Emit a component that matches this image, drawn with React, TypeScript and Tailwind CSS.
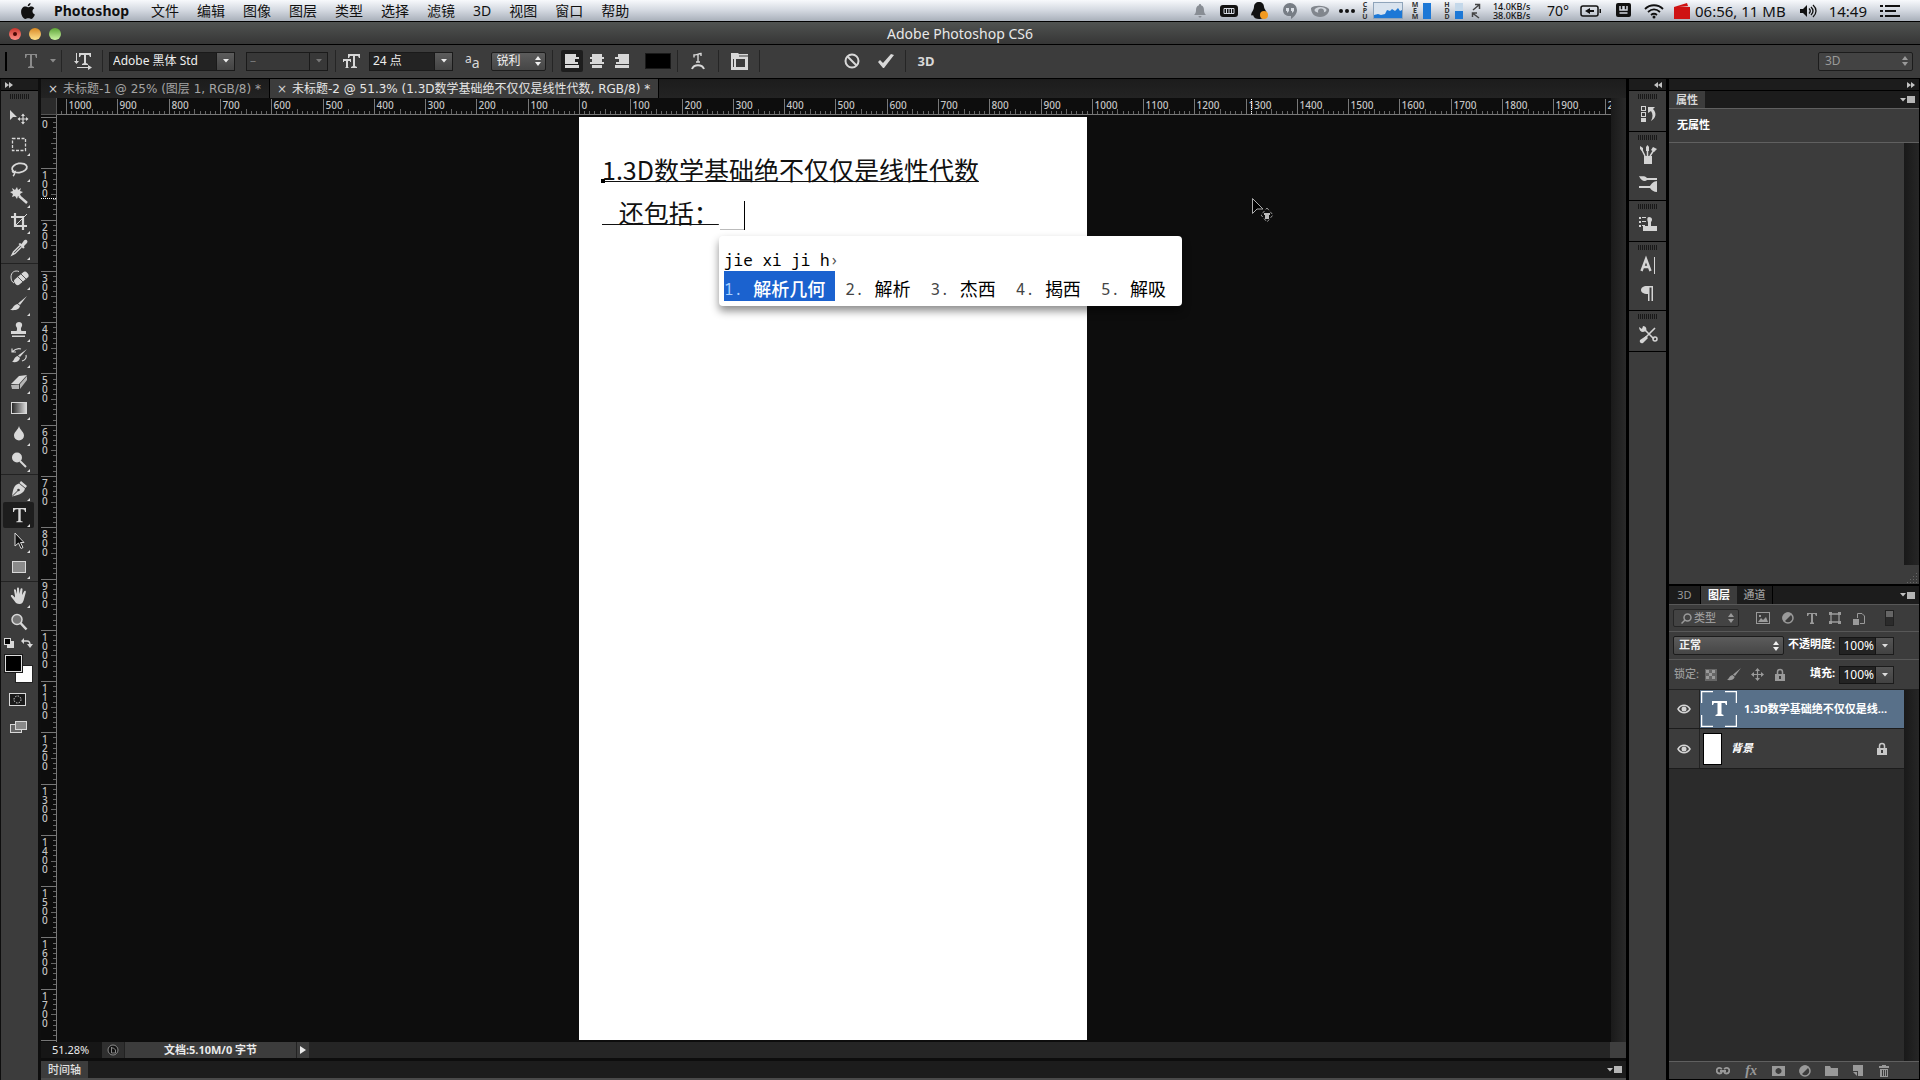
import type { ReactNode } from "react";
import clsx from "clsx";

const ZOOM = 0.5128;

const MENUS = ["文件", "编辑", "图像", "图层", "类型", "选择", "滤镜", "3D", "视图", "窗口", "帮助"];

const CANDIDATES = ["解析几何", "解析", "杰西", "揭西", "解吸"];

interface IconProps {
  w?: number;
  h?: number;
  className?: string;
  children: ReactNode;
}

function Icon({ w = 20, h = 20, className, children }: IconProps) {
  return (
    <svg
      width={w}
      height={h}
      viewBox={`0 0 ${w} ${h}`}
      fill="currentColor"
      aria-hidden="true"
      className={clsx("shrink-0", className)}
    >
      {children}
    </svg>
  );
}

function Stroke({ d, width = 1 }: { d: string; width?: number }) {
  return <path d={d} fill="none" stroke="currentColor" strokeWidth={width} />;
}

/* ---------- menu bar ---------- */

function StackedLabel({ text }: { text: string }) {
  return (
    <span className="flex w-2 flex-col items-center text-[7px] leading-[6px] font-bold text-[#333]">
      {text.split("").map((c, i) => (
        <span key={i}>{c}</span>
      ))}
    </span>
  );
}

function MenuBar() {
  return (
    <header className="flex h-[22px] shrink-0 items-center justify-between border-b border-black bg-gradient-to-b from-[#f7f9fc] via-[#d3d8e0] to-[#a9b0ba] pr-5 pl-[20px] text-sm leading-5 text-[#111]">
      <nav className="flex items-center gap-[18px]">
        <button aria-label="Apple">
          <Icon w={16} h={18}>
            <path d="M10.6 1c.1 1.7-1.300 3.300-2.900 3.200C7.600 2.700 9.100 1.100 10.600 1zM8 5.300c.8 0 1.700-.8 3.200-.8 1.200 0 2.400.6 3.100 1.700-2.700 1.600-2.300 5.200.6 6.300-.6 1.700-2.100 4.300-3.600 4.400-1.200 0-1.600-.7-3-.7s-1.900.7-3 .7C3.300 16.900 1.100 13.200 1.100 10c0-3.400 2-5.400 4.200-5.400 1.200 0 1.900.7 2.700.7z" />
          </Icon>
        </button>
        <button className="mr-1 font-bold">Photoshop</button>
        {MENUS.map((m) => (
          <button key={m}>{m}</button>
        ))}
      </nav>
      <div className="flex items-center">
        <Icon w={14} h={16} className="mr-[13px] text-[#888d94]">
          <path d="M7 1c.8 0 1 .6 1 1.200C10.500 3 11 5 11 7.500c0 2.500 1 3.500 2 4.500H1c1-1 2-2 2-4.500C3 5 3.500 3 6 2.200 6 1.600 6.200 1 7 1zM5.500 13h3c0 2-3 2-3 0z" />
        </Icon>
        <Icon w={18} h={14} className="mr-3">
          <rect x="0" y="1" width="18" height="12" rx="3" />
          <path d="M4 4.500h10v5H4z" fill="none" stroke="#d5dae2" />
          <path d="M6.500 5v4M9 5v4M11.500 5v4" stroke="#d5dae2" />
        </Icon>
        <Icon w={20} h={18} className="mr-3">
          <path d="M9 0c3 0 5 2 5 5 0 2 3 4 3 7 0 1-.6 1.500-1.400.8C15 16 12 17 9 17s-5-1-6-4c-1 1-2 .4-1.800-.8C1.500 10 4 8 4 5c0-3 2-5 5-5z" />
          <circle cx="14" cy="13" r="4" fill="#f29a1f" />
        </Icon>
        <Icon w={16} h={18} className="mr-3 text-[#777d85]">
          <path d="M8 1a7 7 0 0 1 7 7c0 4-3 7-6 9v-3C4 14.500 1 12 1 8a7 7 0 0 1 7-7z" />
          <path d="M4 6h3v3l-2 2V9H4zM9 6h3v3l-2 2V9H9z" fill="#d8dde4" />
        </Icon>
        <Icon w={20} h={16} className="mr-2 text-[#81868d]">
          <path d="M1 5c3-3 14-3 18 1 1 3-3 8-9 8S1 10 1 5z" />
          <ellipse cx="10.500" cy="7" rx="6" ry="3" fill="#cfd4db" />
          <circle cx="11" cy="8.500" r="3" />
        </Icon>
        <Icon w={18} h={6} className="mr-[5px]">
          <circle cx="3" cy="3" r="2" />
          <circle cx="9" cy="3" r="2" />
          <circle cx="15" cy="3" r="2" />
        </Icon>
        <StackedLabel text="CPU" />
        <Icon w={30} h={17} className="mx-1">
          <rect x=".5" y=".5" width="29" height="16" fill="#d9e3ee" stroke="#8fa4ba" />
          <path d="M1 16v-3l4-1 3 1 4-1 2-4 3 1 2-2 3 2 3-3 2 3 2-1v8z" fill="#1d78d6" />
        </Icon>
        <span className="w-1" />
        <StackedLabel text="MEM" />
        <span className="mx-1 h-4 w-2 bg-[#1d78d6]" />
        <span className="w-2" />
        <StackedLabel text="HDD" />
        <span className="mx-1 flex h-4 w-2 flex-col justify-end bg-[#c4d8ea]">
          <span className="h-2 bg-[#1d78d6]" />
        </span>
        <Icon w={10} h={16} className="mr-2 ml-1 text-[#444]">
          <Stroke d="M2 7l6-5M4 1.500h4.500V6M8 15l-6-4.500M1.500 14v-4H6" width={1.500} />
        </Icon>
        <span className="mr-2 ml-1 w-[46px] text-[9px] leading-[9px] font-medium whitespace-nowrap">
          14.0KB/s
          <br />
          38.0KB/s
        </span>
        <span className="mr-[11px]">70°</span>
        <Icon w={22} h={14} className="mr-[14px]">
          <rect x="1" y="2" width="17" height="10" rx="2" fill="none" stroke="currentColor" strokeWidth="1.500" />
          <path d="M19.500 5v4h1.500V5zM5 7l5-3v2h4v2h-4v2z" />
        </Icon>
        <Icon w={15} h={15} className="mr-[13px]">
          <rect width="15" height="14" rx="2" />
          <path d="M4 3v4h3V3M8 3v4h3V3M3.500 10h8" fill="none" stroke="#d3d8e0" strokeWidth="1.500" />
        </Icon>
        <Icon w={20} h={16} className="mr-[10px]">
          <Stroke d="M1 6c5-5 13-5 18 0M4 9c4-3.500 8-3.500 12 0M7 12c2-1.600 4-1.600 6 0" width={1.800} />
          <circle cx="10" cy="14" r="1.500" />
        </Icon>
        <Icon w={16} h={16} className="mr-[5px] text-[#cf1313]">
          <path d="M0 4l13-4 1 3H5l11 1v12H0z" />
        </Icon>
        <span className="mr-[13px] text-[15px]">06:56, 11 MB</span>
        <Icon w={18} h={14} className="mr-3">
          <path d="M1 5h3l4-4v12L4 9H1z" />
          <Stroke d="M10 4.500c1.500 1.500 1.500 3.500 0 5M12 3c2.500 2.500 2.500 5.500 0 8M14 1c4 3.500 4 8.500 0 12" width={1.300} />
        </Icon>
        <span className="mr-[13px] text-[15px]">14:49</span>
        <Icon w={20} h={14}>
          <path d="M0 1h3v2H0zM5 1h15v2H5zM0 6h3v2H0zM5 6h11v2H5zM0 11h3v2H0zM5 11h15v2H5z" />
        </Icon>
      </div>
    </header>
  );
}

/* ---------- title + options bar ---------- */

function TitleBar() {
  return (
    <div className="flex h-[23px] shrink-0 items-center border-b border-black bg-gradient-to-b from-[#505351] to-[#363636] px-[9px] pt-[2px]">
      <div className="flex flex-1 gap-2">
        <button aria-label="关闭" className="flex h-3 w-3 items-center justify-center rounded-full bg-gradient-to-b from-[#c8332c] to-[#ff8f88]">
          <span className="h-1 w-1 rounded-full bg-[#4a0805]" />
        </button>
        <button aria-label="最小化" className="h-3 w-3 rounded-full bg-gradient-to-b from-[#d98a1e] to-[#ffe28a]" />
        <button aria-label="缩放" className="h-3 w-3 rounded-full bg-gradient-to-b from-[#5da536] to-[#cdf5a4]" />
      </div>
      <h1 className="text-sm leading-5 text-[#e8e8e8]">Adobe Photoshop CS6</h1>
      <div className="flex-1" />
    </div>
  );
}

function DownArrow() {
  return (
    <Icon w={6} h={4}>
      <path d="M0 0h6L3 3.500z" />
    </Icon>
  );
}

function UpDown() {
  return (
    <Icon w={6} h={10}>
      <path d="M0 4h6L3 0zM0 6h6L3 10z" />
    </Icon>
  );
}

interface ComboProps {
  label: string;
  value: string;
  className: string;
  disabled?: boolean;
}

function Combo({ label, value, className, disabled }: ComboProps) {
  return (
    <div
      className={clsx(
        "flex h-[19px] items-stretch border border-[#1a1a1a] text-xs",
        disabled ? "bg-[#383838] text-[#777]" : "bg-[#232323] text-[#eee]",
        className,
      )}
    >
      <select
        aria-label={label}
        disabled={disabled}
        defaultValue={value}
        className="min-w-0 flex-1 appearance-none pl-[3px] outline-none"
      >
        <option>{value}</option>
      </select>
      <span
        className={clsx(
          "flex w-[18px] items-center justify-center border-l border-[#1a1a1a]",
          !disabled && "bg-gradient-to-b from-[#5c5c5c] to-[#444]",
        )}
      >
        <DownArrow />
      </span>
    </div>
  );
}

function Popup({ label, value, className, dim }: { label: string; value: string; className: string; dim?: boolean }) {
  return (
    <div
      className={clsx(
        "flex h-[19px] items-center rounded-xs border border-[#1c1c1c] pr-1",
        dim ? "bg-[#434343] text-[#9a9a9a]" : "bg-gradient-to-b from-[#5c5c5c] to-[#464646] text-[#f0f0f0]",
        className,
      )}
    >
      <select aria-label={label} defaultValue={value} className="min-w-0 flex-1 appearance-none pl-[5px] outline-none">
        <option>{value}</option>
      </select>
      <UpDown />
    </div>
  );
}

function Divider({ className }: { className?: string }) {
  return <span className={clsx("h-[22px] w-px bg-[#252525]", className)} />;
}

function AlignIcon({ d }: { d: string }) {
  return (
    <Icon w={14} h={14}>
      <path d={d} />
    </Icon>
  );
}

function OptionsBar() {
  return (
    <div className="flex h-[34px] shrink-0 items-center border-b border-black bg-[#3c3c3c] pr-[7px] pb-px pl-[5px] text-[#d8d8d8]">
      <span className="h-[19px] w-[2px] bg-black" />
      <button aria-label="工具预设" className="ml-[17px] flex items-center gap-3 text-[#8b8b8b]">
        <Icon w={14} h={16}>
          <path d="M1 1h12v4h-1l-1-3H8v11l2 1v1H4v-1l2-1V2H3L2 5H1z" />
        </Icon>
        <DownArrow />
      </button>
      <Divider className="ml-[5px]" />
      <button aria-label="切换文本取向" className="ml-3">
        <Icon w={18} h={18}>
          <path d="M5 1h12v4h-1l-1-2h-3v8l2 1v1H8v-1l2-1V3H7L6 5H5z" />
          <path d="M2 1h1v8h2l-2.500 3L0 9h2zM3 15h11v-2l4 2.500-4 2.500v-2H3z" />
        </Icon>
      </button>
      <Divider className="ml-[10px]" />
      <Combo label="字体" value="Adobe 黑体 Std" className="ml-[6px] w-[126px]" />
      <Combo label="字体样式" value="–" disabled className="ml-[11px] w-[82px]" />
      <Divider className="ml-[7px]" />
      <Icon w={18} h={16} className="ml-[7px]">
        <path d="M5 1h12v4h-1l-1-2h-3v10l2 1v1H8v-1l2-1V3H7L6 5H5z" />
        <path d="M0 6h8v3H7V8H5v6l1 1H2l1-1V8H1v1H0z" />
      </Icon>
      <Combo label="字号" value="24 点" className="ml-2 w-[84px]" />
      <span className="ml-3 flex items-center">
        <span className="pb-1 text-xs leading-4">a</span>
        <span className="pt-1 text-sm leading-4">a</span>
      </span>
      <Popup label="消除锯齿" value="锐利" className="ml-[11px] w-[55px] text-xs" />
      <Divider className="ml-[6px]" />
      <div className="ml-2 flex items-center gap-[3px]">
        <button aria-label="左对齐" className="flex h-[22px] w-[22px] items-center justify-center rounded-xs bg-[#1d1d1d]">
          <AlignIcon d="M0 0h11v3H0zM0 3h14v2H0zM0 5h10v3H0zM0 8h13v2H0zM0 11h14v3H0z" />
        </button>
        <button aria-label="居中" className="flex h-[22px] w-[22px] items-center justify-center">
          <AlignIcon d="M2 0h10v3H2zM0 3h14v2H0zM2 5h10v3H2zM0 8h14v2H0zM2 11h10v3H2z" />
        </button>
        <button aria-label="右对齐" className="flex h-[22px] w-[22px] items-center justify-center">
          <AlignIcon d="M3 0h11v3H3zM0 3h14v2H0zM4 5h10v3H4zM1 8h13v2H1zM0 11h14v3H0z" />
        </button>
      </div>
      <button aria-label="文本颜色" className="ml-[12px] h-4 w-[26px] border border-[#1a1a1a] bg-black" />
      <Divider className="ml-[6px]" />
      <button aria-label="变形文字" className="ml-[12px]">
        <Icon w={16} h={18}>
          <Stroke d="M4 5.500V3c2 0 4-1 7-1.500V4M8 2.500v7M6 10h4" width={1.400} />
          <Stroke d="M2 17c2-5 10-5 12 0" width={2} />
        </Icon>
      </button>
      <Divider className="ml-[12px]" />
      <button aria-label="字符和段落面板" className="ml-3">
        <Icon w={17} h={17}>
          <path d="M0 0h7l1 1h9v16H0zM2 6v8h1V6zM5 6v8h9V6z" fillRule="evenodd" />
          <path d="M8 3h9" stroke="#3c3c3c" />
        </Icon>
      </button>
      <Divider className="ml-[11px]" />
      <button aria-label="取消" className="ml-[84px]">
        <Icon w={16} h={16}>
          <circle cx="8" cy="8" r="6.500" fill="none" stroke="currentColor" strokeWidth="2" />
          <Stroke d="M3.500 3.500l9 9" width={2} />
        </Icon>
      </button>
      <button aria-label="提交" className="ml-[18px]">
        <Icon w={16} h={16}>
          <path d="M0 9l2-2 3 3 8-9 3 1-10 13H5z" />
        </Icon>
      </button>
      <Divider className="ml-[11px]" />
      <button className="ml-3 text-[13px] leading-5 font-bold">3D</button>
      <div className="flex-1" />
      <Popup label="工作区" value="3D" dim className="w-[95px] pl-px text-xs" />
    </div>
  );
}

/* ---------- toolbox ---------- */

const TOOL_GROUPS: { name: string; flyout?: boolean; active?: boolean; art: ReactNode }[][] = [
  [
    {
      name: "移动工具",
      art: (
        <>
          <path d="M1 2l7 7H4l-3 3z" />
          <Stroke d="M14 6.500v9M9.500 11h9" width={1.200} />
          <path d="M12 8l2-2.500L16 8zM12 14l2 2.500 2-2.500zM11 9l-2.500 2 2.500 2zM17 9l2.500 2-2.500 2z" />
        </>
      ),
    },
    {
      name: "矩形选框工具",
      flyout: true,
      art: <rect x="3.500" y="4.500" width="13" height="12" fill="none" stroke="currentColor" strokeDasharray="3 1.500" strokeWidth="1.300" />,
    },
    {
      name: "套索工具",
      flyout: true,
      art: (
        <>
          <ellipse cx="10.500" cy="8" rx="7.500" ry="4.500" fill="none" stroke="currentColor" strokeWidth="1.800" transform="rotate(-10 10 8)" />
          <Stroke d="M4 10c-1.500 2 .5 3 2 2-.5 2-.5 3-2 4" width={1.600} />
        </>
      ),
    },
    {
      name: "魔棒工具",
      flyout: true,
      art: (
        <>
          <path d="M8 1l1 3 3-2-1 3 3 1-3 2 1 3-3-1-1 3-2-3-3 1 1-3-3-2 3-1-1-3 3 2z" />
          <Stroke d="M10 10l8 7" width={2.500} />
        </>
      ),
    },
    {
      name: "裁剪工具",
      flyout: true,
      art: (
        <>
          <Stroke d="M6 1v13h12M2 5h12v13" width={2.200} />
          <Stroke d="M7 13L18 2" />
        </>
      ),
    },
    {
      name: "吸管工具",
      flyout: true,
      art: (
        <>
          <path d="M11 5l1.500 1 2.500-3.500c2-2 5 1 2.500 3L15 8l.5 2-1.500.5L9.500 6z" />
          <Stroke d="M11 7.500L4.500 14l-1.500 3 3-1.500 6.500-6.500" width={1.400} />
        </>
      ),
    },
  ],
  [
    {
      name: "污点修复画笔工具",
      flyout: true,
      art: (
        <>
          <rect x="4" y="7" width="16" height="7" rx="3" transform="rotate(-40 12 10)" />
          <path d="M9 9l5 5M12 6l5 5" stroke="#555" />
          <Stroke d="M10 3.500C6 2 2 4 2 9c0 3 1 5 3 6" />
        </>
      ),
    },
    {
      name: "画笔工具",
      flyout: true,
      art: <path d="M18 2l-7 9-2-1.500zM8.500 10l2.500 2c-1 4-5 4.500-10 4 3-1 3-5 7.500-6z" />,
    },
    {
      name: "仿制图章工具",
      flyout: true,
      art: <path d="M10 2c3 0 4 3 2.500 5-1 1.500-.5 3 0 4H17v3H2v-3h5.500c.5-1 1-2.500 0-4C6 5 7 2 10 2zM3 15.500h13v1.500H3z" />,
    },
    {
      name: "历史记录画笔工具",
      flyout: true,
      art: (
        <>
          <path d="M18 3l-7 8-2-1.500zM8.500 10l2.500 2c-1 4-4 4.500-8 4 2-1 2-5 5.500-6z" />
          <Stroke d="M3 6c3-3 6-4 9-3M3 2.500V6h4M17 9c1 3-1 5-4 6" width={1.200} />
        </>
      ),
    },
    {
      name: "橡皮擦工具",
      flyout: true,
      art: (
        <>
          <path d="M2 12l8-8 8-1-8 9z" />
          <path d="M2 13l8-.5V17H3zM11 12l7-8v4l-7 9z" fill="#b5b5b5" />
        </>
      ),
    },
    {
      name: "渐变工具",
      flyout: true,
      art: (
        <>
          <defs>
            <linearGradient id="toolGradient">
              <stop offset="0" stopColor="#222" />
              <stop offset="1" stopColor="#ddd" />
            </linearGradient>
          </defs>
          <rect x="2.500" y="4.500" width="15" height="11" fill="url(#toolGradient)" stroke="currentColor" />
        </>
      ),
    },
    {
      name: "模糊工具",
      flyout: true,
      art: <path d="M10 2c1 4 5 6 5 9.500a5 5 0 0 1-10 0C5 8 9 6 10 2z" />,
    },
    {
      name: "减淡工具",
      flyout: true,
      art: (
        <>
          <circle cx="8" cy="7.500" r="5" />
          <Stroke d="M11 11l6 6" width={2} />
        </>
      ),
    },
  ],
  [
    {
      name: "钢笔工具",
      flyout: true,
      art: (
        <>
          <path d="M12 2l6 5-1.500 2-6-5zM10 4.500l6 5c-1 4-4 6-13 8C4 10 5 6 10 4.500z" />
          <path d="M3 17.500l6-6" stroke="#3c3c3c" />
          <circle cx="9.500" cy="11" r="1.300" fill="#3c3c3c" />
        </>
      ),
    },
    {
      name: "横排文字工具",
      flyout: true,
      active: true,
      art: <path d="M4 3h13v4h-1c-.3-2-1-2.700-3-2.700h-1.300V15c0 1 .3 1.300 2 1.500v.8H7.300v-.8c1.700-.2 2-.5 2-1.500V4.300H8C6 4.300 5.300 5 5 7H4z" />,
    },
    {
      name: "路径选择工具",
      flyout: true,
      art: <path d="M6 2v13l3.500-3 2.500 5.500 2-1-2.500-5H15z" fill="#111" stroke="currentColor" />,
    },
    {
      name: "矩形工具",
      flyout: true,
      art: <rect x="3.500" y="4.500" width="13" height="11" fill="#8a8a8a" stroke="currentColor" />,
    },
  ],
  [
    {
      name: "抓手工具",
      flyout: true,
      art: <path d="M6 10L5 4.500c-.2-1.400 1.500-1.700 1.900-.4L8 8V2.500c0-1.500 2-1.500 2 0L10.500 8l1-5c.3-1.400 2.200-1 2 .4L13 9l2-3.500c.7-1.300 2.300-.5 1.800.8L15 13c-.6 3-2 5-4.500 5S6.500 17 5.500 15L2 10.500C1.200 9.300 2.700 8.400 3.700 9.300L6 11.500z" />,
    },
    {
      name: "缩放工具",
      art: (
        <>
          <circle cx="8" cy="7.500" r="5" fill="#777" stroke="currentColor" strokeWidth="1.500" />
          <Stroke d="M11.500 11l6 6.500" width={2.500} />
        </>
      ),
    },
  ],
];

function Grip() {
  return (
    <svg width="20" height="5" aria-hidden="true" className="text-[#181818]">
      <path d="M.5 0v5M2.500 0v5M4.500 0v5M6.500 0v5M8.500 0v5M10.500 0v5M12.500 0v5M14.500 0v5M16.500 0v5M18.500 0v5" stroke="currentColor" />
    </svg>
  );
}

function DoubleArrow({ left }: { left?: boolean }) {
  return (
    <Icon w={8} h={6} className="text-[#c4c4c4]">
      <path d={left ? "M4 0v6L0 3zM8 0v6L4 3z" : "M0 0v6l4-3zM4 0v6l4-3z"} />
    </Icon>
  );
}

function Corner() {
  return (
    <svg width="3" height="3" aria-hidden="true" className="absolute right-1 bottom-px">
      <path d="M3 0v3H0z" fill="#ddd" />
    </svg>
  );
}

function Toolbox() {
  return (
    <aside className="flex w-[41px] shrink-0 flex-col border-r-3 border-l border-[#0e0e0e] bg-[#3c3c3c] text-[#d8d8d8]">
      <div className="flex h-3 shrink-0 items-center border-b border-black bg-[#1c1c1c] pl-1">
        <DoubleArrow />
      </div>
      <div className="flex h-[14px] shrink-0 justify-center pt-[3px]">
        <Grip />
      </div>
      {TOOL_GROUPS.map((group, i) => (
        <div
          key={i}
          className={clsx("flex flex-col pr-1 pl-[2px]", i > 0 && "border-t border-[#222] pt-px", i === 1 && "mt-[2px]", i > 1 && "mt-px")}
        >
          {group.map((tool) => (
            <button
              key={tool.name}
              aria-label={tool.name}
              className={clsx(
                "relative flex h-[26px] items-center justify-center rounded-xs",
                tool.active && "bg-[#1d1d1d]",
              )}
            >
              <Icon>{tool.art}</Icon>
              {tool.flyout && <Corner />}
            </button>
          ))}
        </div>
      ))}
      <div className="mt-[3px] flex justify-between pr-[5px] pl-[3px]">
        <button aria-label="默认前景色和背景色">
          <Icon w={10} h={10}>
            <rect x="3" y="3" width="7" height="7" />
            <rect x=".5" y=".5" width="6" height="6" fill="#000" stroke="currentColor" />
          </Icon>
        </button>
        <button aria-label="切换前景色和背景色">
          <Icon w={12} h={10}>
            <Stroke d="M2 3h4c2 0 3 1 3 4" width={1.500} />
            <path d="M3 0v6L0 3zM6 6h6l-3 4z" />
          </Icon>
        </button>
      </div>
      <svg width="30" height="30" className="mt-[6px] ml-[3px]" role="img" aria-label="前景色和背景色">
        <rect x="11.500" y="11.500" width="17" height="17" fill="#fff" stroke="#222" />
        <rect x=".5" y=".5" width="18" height="18" fill="#000" stroke="#1a1a1a" />
        <rect x="1.500" y="1.500" width="16" height="16" fill="#000" stroke="#ddd" />
      </svg>
      <button aria-label="快速蒙版" className="mt-[9px] ml-2 self-start">
        <Icon w={17} h={13}>
          <rect x=".5" y=".5" width="16" height="12" fill="#1a1a1a" stroke="currentColor" />
          <circle cx="8.500" cy="6.500" r="3.500" fill="none" stroke="currentColor" strokeDasharray="1.500 1.200" />
        </Icon>
      </button>
      <button aria-label="屏幕模式" className="mt-[14px] ml-2 self-start">
        <Icon w={19} h={14}>
          <rect x="1.500" y="4.500" width="11" height="8" fill="#666" stroke="currentColor" />
          <rect x="6.500" y="1.500" width="11" height="8" fill="#888" stroke="currentColor" />
        </Icon>
      </button>
    </aside>
  );
}

/* ---------- document ---------- */

const TABS = [
  { title: "未标题-1 @ 25% (图层 1, RGB/8) *", active: false },
  { title: "未标题-2 @ 51.3% (1.3D数学基础绝不仅仅是线性代数, RGB/8) *", active: true },
];

function ticks(from: number, to: number) {
  const out: number[] = [];
  for (let v = from; v <= to; v += 10) out.push(v);
  return out;
}

function tickLength(v: number) {
  if (v % 100 === 0) return 16;
  return v % 50 === 0 ? 6 : 4;
}

function HorizontalRuler({ origin }: { origin: number }) {
  return (
    <svg className="h-[17px] min-w-0 flex-1 border-b border-[#777] text-[10px] font-medium" aria-hidden="true">
      {ticks(-1010, 2000).map((v) => {
        const x = Math.round(origin + v * ZOOM) + 0.5;
        return (
          <g key={v}>
            <path d={`M${x} 17v-${tickLength(v)}`} stroke={v % 100 === 0 ? "#777" : "#666"} />
            {v % 100 === 0 && (
              <text x={x + 2} y={11} fill="#c4c4c4">
                {Math.abs(v)}
              </text>
            )}
          </g>
        );
      })}
      <path d="M1194.500 1v16" stroke="#fff" strokeDasharray="1 1" />
    </svg>
  );
}

function VerticalRuler({ origin }: { origin: number }) {
  return (
    <svg className="w-[16px] shrink-0 border-r border-[#777] text-[10px] font-medium" aria-hidden="true">
      {ticks(0, 1800).map((v) => {
        const y = Math.round(origin + v * ZOOM) + 0.5;
        return (
          <g key={v}>
            <path d={`M16 ${y}h-${tickLength(v)}`} stroke={v % 100 === 0 ? "#777" : "#666"} />
            {v % 100 === 0 &&
              v < 1800 &&
              String(v)
                .split("")
                .map((c, i) => (
                  <text key={i} x={1} y={y + 10 + i * 9} fill="#c4c4c4">
                    {c}
                  </text>
                ))}
          </g>
        );
      })}
      <path d="M0 83.500h16" stroke="#fff" strokeDasharray="1 1" />
    </svg>
  );
}

function ImeWindow() {
  return (
    <div className="absolute top-[119px] left-[140px] h-[70px] rounded-sm bg-white py-[9px] pr-4 pl-[5px] font-['Noto_Sans_Mono','DejaVu_Sans_Mono','Noto_Sans_CJK_SC',monospace] text-[16px] whitespace-nowrap text-black shadow-[0_5px_8px_rgba(0,0,0,0.45)]">
      <div className="h-[26px] leading-[30px]">
        jie xi ji h<span className="text-[16px] text-[#555]">›</span>
      </div>
      <ol className="flex h-[30px]">
        {CANDIDATES.map((word, i) => (
          <li
            key={word}
            className={clsx(
              "flex h-[30px] items-center gap-[10px] pt-[6px]",
              i === 0 ? "mr-[10px] bg-[#1b62cf] pr-[10px] text-white" : i < CANDIDATES.length - 1 && "mr-[20px]",
            )}
          >
            <span className={i === 0 ? "text-[#a9d0ff]" : "text-[#444]"}>{i + 1}.</span>
            <span className={clsx("text-[18px]", i === 0 && "font-medium")}>{word}</span>
          </li>
        ))}
      </ol>
    </div>
  );
}

function Artboard() {
  return (
    <div className="relative w-[508px] bg-white font-['Noto_Sans_CJK_SC',sans-serif]">
      <p className="pt-[31px] pl-[23px] text-[25px] leading-[43px] whitespace-pre text-[#111]">
        <span className="underline decoration-1 underline-offset-1">1.3D数学基础绝不仅仅是线性代数</span>
        <br />
        <span className="underline decoration-1 underline-offset-1">{"   还包括："}</span>
      </p>
      <span className="absolute top-[62px] left-[22px] h-1 w-1 bg-black" />
      <span className="absolute top-[84px] left-[141px] h-[29px] w-[25px] border-b border-[#bbb]" />
      <span className="absolute top-[84px] left-[165px] h-[29px] w-px bg-black" />
      <ImeWindow />
    </div>
  );
}

function PanelMenu() {
  return (
    <button aria-label="面板菜单" className="ml-auto flex items-center gap-px pr-1 text-[#c0c0c0]">
      <Icon w={6} h={4}>
        <path d="M0 0h6L3 3.500z" />
      </Icon>
      <span className="h-[7px] w-2 bg-[#b5b5b5]" />
    </button>
  );
}

function DocumentArea() {
  return (
    <main className="flex min-w-0 flex-1 flex-col border-r-3 border-black bg-[#0d0d0d]">
      <div
        role="tablist"
        className="flex h-[19px] shrink-0 bg-gradient-to-b from-[#1c1c1c] to-[#232323] font-['DejaVu_Sans','Noto_Sans_CJK_SC',sans-serif] text-xs leading-[18px]"
      >
        {TABS.map((tab) => (
          <div
            key={tab.title}
            className={clsx(
              "flex items-center gap-[5px] border-r border-black pl-[7px]",
              tab.active ? "bg-[#3c3c3c] pr-2 text-[#e6e6e6]" : "pr-2 text-[#a5a5a5]",
            )}
          >
            <button aria-label="关闭标签" className="text-[#d0d0d0]">
              ×
            </button>
            <button role="tab" aria-selected={tab.active} className="whitespace-nowrap">
              {tab.title}
            </button>
          </div>
        ))}
      </div>
      <div className="flex min-h-0 flex-1">
        <div className="flex min-w-0 flex-1 flex-col">
          <div className="flex shrink-0">
            <span className="h-[17px] w-4 shrink-0 border-r border-b border-[#555] bg-[#2b2b2b]" />
            <HorizontalRuler origin={522} />
          </div>
          <div className="flex min-h-0 flex-1">
            <VerticalRuler origin={2} />
            <div className="relative flex min-w-0 flex-1 justify-center overflow-hidden py-[2px] pr-[2px]">
              <Artboard />
              <Icon w={26} h={26} className="absolute top-[82px] left-[1194px] text-black">
                <path d="M1.500 1.500v15l4.500-4.500h6z" stroke="#aaa" />
                <path d="M16 11l6 7-6 7-6-7z" fill="none" stroke="#999" strokeDasharray="3 2" />
                <path d="M13 16h6v2h-1v4h-4v-4h-1z" fill="#bbb" />
              </Icon>
            </div>
          </div>
        </div>
        <div className="w-[15px] shrink-0 bg-gradient-to-r from-[#1a1a1a] to-[#2a2a2a]" />
      </div>
      <div className="flex h-4 shrink-0 items-stretch bg-[#252525] text-[11px] leading-4 text-[#eaeaea]">
        <span className="w-[61px] bg-[#161616] pl-[11px]">51.28%</span>
        <span className="flex w-[23px] items-center justify-center border-r border-[#222] bg-[#2f2f2f]">
          <Icon w={12} h={12} className="text-[#8a8a8a]">
            <circle cx="6" cy="6" r="5" fill="#111" stroke="currentColor" />
            <Stroke d="M4.500 3v6h4V6l-2-2h-2" />
          </Icon>
        </span>
        <span className="w-[171px] bg-[#3c3c3c] text-center font-bold">文档:5.10M/0 字节</span>
        <button aria-label="状态栏选项" className="flex w-[13px] items-center justify-center border-l border-[#222] bg-[#3c3c3c]">
          <Icon w={6} h={8}>
            <path d="M0 0v8l6-4z" />
          </Icon>
        </button>
        <span className="ml-auto w-4 bg-[#3f3f3f]" />
      </div>
      <div className="mt-[3px] flex h-[19px] shrink-0 items-stretch border-b-2 border-[#4a4a4a] bg-[#1c1c1c]">
        <button className="bg-[#3c3c3c] px-[7px] text-[11px] leading-4 font-medium text-[#e0e0e0]">时间轴</button>
        <PanelMenu />
      </div>
    </main>
  );
}

/* ---------- collapsed panel dock ---------- */

const DOCK: { name: string; art: ReactNode }[][] = [
  [
    {
      name: "历史记录",
      art: (
        <>
          <path d="M3 2h5v5H3zM4 3v3h3V3zM3 8h5v5H3zM4 9v3h3V9zM3 14h5v4H3z" fillRule="evenodd" />
          <path d="M10 3h7l-2 2c4 4 3 9-2 12 2-4 2-7 0-10l-3 2z" />
        </>
      ),
    },
  ],
  [
    {
      name: "画笔",
      art: (
        <>
          <path d="M6 11h8v8H6z" />
          <Stroke d="M7 11L3 3M9.500 11V3M12 11l4-6" width={1.500} />
          <path d="M2 1l3 2v4L2 4zM8 2l1.500-2L11 2v4H8zM13 5l2-3 4 2-3 3z" />
        </>
      ),
    },
    {
      name: "画笔预设",
      art: (
        <path d="M1 3c3 1 5-1 8 2h10v2H9c-2 2-6 1-8-4zM1 13h11c1-2 4-5 7-5v11c-3 0-6-2-7-4H1z" />
      ),
    },
  ],
  [
    {
      name: "仿制源",
      art: <path d="M1 3h2v2H1zM1 7h2v2H1zM1 11h2v2H1zM4 3h4v1H4zM4 7h4v1H4zM4 11h3v1H4zM11 3c3 0 4 3 2 5v4h6v5H5v-5h5V8C9 6 9 3 11 3z" />,
    },
  ],
  [
    {
      name: "字符",
      art: (
        <>
          <Stroke d="M3.500 16L8 4l4.500 12M5 12h6" width={2.400} />
          <path d="M16 2h1v17h-1z" />
        </>
      ),
    },
    {
      name: "段落",
      art: <path d="M9 3h6v15h-1.500V4.500h-2V18H10v-7C5 11 3 9 3 7s2-4 6-4z" />,
    },
  ],
  [
    {
      name: "工具预设",
      art: (
        <>
          <Stroke d="M5 4l11 11M17 4L6 15" width={1.600} />
          <path d="M1 3l3 2 1-3c3 0 4 3 3 5L5 8C3 8 1 6 1 3zM8 12l2 2-5 5c-2 1-4-1-3-3z" />
          <circle cx="17" cy="15" r="2" fill="none" stroke="currentColor" strokeWidth="1.500" />
        </>
      ),
    },
  ],
];

function Dock() {
  return (
    <aside className="flex w-[40px] shrink-0 flex-col border-r-3 border-black bg-[#3c3c3c] text-[#d4d4d4]">
      <div className="flex h-3 shrink-0 items-center justify-end border-b border-black bg-[#1c1c1c] pr-1">
        <DoubleArrow left />
      </div>
      {DOCK.map((group, i) => (
        <div key={i} className="flex flex-col items-center border-b border-black pt-[3px] pb-1">
          <Grip />
          {group.map((p) => (
            <button key={p.name} aria-label={p.name} className="mt-[2px] flex h-[26px] items-center">
              <Icon>{p.art}</Icon>
            </button>
          ))}
        </div>
      ))}
    </aside>
  );
}

/* ---------- panels ---------- */

function PropertiesPanel() {
  return (
    <section className="flex h-[495px] shrink-0 flex-col border-b-2 border-black bg-[#3c3c3c]">
      <div role="tablist" className="flex h-[17px] shrink-0 items-stretch bg-[#1c1c1c]">
        <button role="tab" aria-selected className="bg-[#3c3c3c] px-[7px] text-[11px] leading-4 font-bold text-[#d8d8d8]">
          属性
        </button>
        <PanelMenu />
      </div>
      <div className="h-[35px] shrink-0 border-t border-b border-[#606060] px-2 text-[11px] leading-8 font-bold text-white">
        无属性
      </div>
      <div className="flex min-h-0 flex-1 justify-end">
        <div className="flex w-[15px] flex-col bg-gradient-to-r from-[#191919] to-[#262626]">
          <span className="mt-auto flex h-[19px] items-end justify-end bg-[#3c3c3c]">
            <Icon w={12} h={12} className="text-[#666]">
              <path d="M9 1h1v1H9zM9 4h1v1H9zM6 4h1v1H6zM9 7h1v1H9zM6 7h1v1H6zM3 7h1v1H3zM9 10h1v1H9zM6 10h1v1H6zM3 10h1v1H3zM0 10h1v1H0z" />
            </Icon>
          </span>
        </div>
      </div>
    </section>
  );
}

function PercentField({ id, label }: { id: string; label: string }) {
  return (
    <div className="ml-auto flex items-center">
      <label htmlFor={id} className="mr-1 pb-[2px] text-[11px] font-bold text-white">
        {label}
      </label>
      <input id={id} defaultValue="100%" className="h-[18px] w-[37px] border border-[#151515] bg-[#232323] pr-px text-right text-xs text-white outline-none" />
      <button aria-label={`${label}滑块`} className="flex h-[18px] w-[18px] items-center justify-center border border-l-0 border-[#1c1c1c] bg-gradient-to-b from-[#555] to-[#424242] text-[#ddd]">
        <DownArrow />
      </button>
    </div>
  );
}

function AdjustIcon() {
  return (
    <Icon w={12} h={12}>
      <circle cx="6" cy="6" r="5" fill="none" stroke="currentColor" strokeWidth="1.500" />
      <path d="M10 2L2 10A5.500 5.500 0 0 1 10 2z" />
    </Icon>
  );
}

function LockIcon() {
  return (
    <Icon w={12} h={14}>
      <Stroke d="M3.500 6V4a2.500 2.500 0 0 1 5 0v2" width={1.500} />
      <path d="M1 6h10v7H1zM5 8v3h2V8z" fillRule="evenodd" />
    </Icon>
  );
}

function EyeButton() {
  return (
    <button aria-label="指示图层可见性" className="flex w-[31px] shrink-0 items-center justify-center border-r border-[#222] text-[#d5d5d5]">
      <Icon w={14} h={10}>
        <path d="M1 5c3-5 9-5 12 0-3 5-9 5-12 0z" fill="none" stroke="currentColor" strokeWidth="1.500" />
        <circle cx="7" cy="5" r="2.500" />
      </Icon>
    </button>
  );
}

function LayersPanel() {
  return (
    <section className="flex min-h-0 flex-1 flex-col bg-[#3c3c3c] text-[#9a9a9a]">
      <div role="tablist" className="flex h-[18px] shrink-0 items-stretch bg-[#1c1c1c] text-[11px] leading-[18px]">
        <button role="tab" className="w-8 border-r border-black">3D</button>
        <button role="tab" aria-selected className="w-9 bg-[#3c3c3c] font-bold text-white">
          图层
        </button>
        <button role="tab" className="w-9 border-r border-black font-medium">通道</button>
        <PanelMenu />
      </div>
      <div className="flex h-7 shrink-0 items-center border-t border-b border-[#585858] pr-[25px] pl-1">
        <div className="flex h-[18px] w-[66px] items-center rounded-xs border border-[#262626] bg-[#434343] pr-1 pl-[7px]">
          <Icon w={11} h={11}>
            <circle cx="6.500" cy="4.500" r="3.500" fill="none" stroke="currentColor" strokeWidth="1.500" />
            <Stroke d="M4 7l-3.500 3.500" width={1.500} />
          </Icon>
          <select aria-label="图层过滤" className="min-w-0 flex-1 appearance-none pl-[2px] text-[11px] font-medium outline-none">
            <option>类型</option>
          </select>
          <UpDown />
        </div>
        <div className="ml-[17px] flex flex-1 items-center justify-between">
          <button aria-label="像素图层">
            <Icon w={14} h={12}>
              <path d="M0 0h14v12H0zM1 1v10h12V1zM2 10l3-4 2 2 3-3 2 5zM3 3h2v2H3z" fillRule="evenodd" />
            </Icon>
          </button>
          <button aria-label="调整图层">
            <AdjustIcon />
          </button>
          <button aria-label="文字图层">
            <Icon w={12} h={12}>
              <path d="M1 1h10v3h-1L9 2H7v8l1 1v1H4v-1l1-1V2H3L2 4H1z" />
            </Icon>
          </button>
          <button aria-label="形状图层">
            <Icon w={12} h={12}>
              <Stroke d="M2 2h8v8H2z" width={1.300} />
              <path d="M0 0h3v3H0zM9 0h3v3H9zM0 9h3v3H0zM9 9h3v3H9z" />
            </Icon>
          </button>
          <button aria-label="智能对象">
            <Icon w={12} h={13}>
              <Stroke d="M4.500 6V1.500H9L11.500 4v7.500H7" />
              <path d="M0 7h6v6H0z" />
            </Icon>
          </button>
          <button aria-label="过滤开关" className="ml-2 flex h-4 w-[9px] flex-col border border-[#222] bg-[#2b2b2b]">
            <span className="h-[6px] w-full bg-[#666]" />
          </button>
        </div>
      </div>
      <div className="flex h-7 shrink-0 items-center border-b border-[#585858] pr-[25px] pl-1">
        <Popup label="混合模式" value="正常" className="w-[111px] text-[11px] font-bold" />
        <PercentField id="opacity" label="不透明度:" />
      </div>
      <div className="flex h-[30px] shrink-0 items-center border-b border-[#222] pr-[25px] pl-[5px]">
        <span className="text-[11px] font-medium">锁定:</span>
        <div className="ml-[6px] flex items-center gap-[10px]">
          <button aria-label="锁定透明像素">
            <Icon w={12} h={12}>
              <path d="M0 0h12v12H0z" fill="#666" />
              <path d="M1 1h3v3H1zM7 1h3v3H7zM4 4h3v3H4zM1 7h3v3H1zM7 7h3v3H7z" />
            </Icon>
          </button>
          <button aria-label="锁定图像像素">
            <Icon w={14} h={13}>
              <path d="M14 0L8 8 6 6.500zM5.500 7l2.200 2c-1 3-4 3.500-7.700 3 2-1 2-4 5.500-5z" />
            </Icon>
          </button>
          <button aria-label="锁定位置">
            <Icon w={13} h={13}>
              <Stroke d="M6.500 1v11M1 6.500h11" width={1.200} />
              <path d="M4 3l2.500-3L9 3zM4 10l2.500 3L9 10zM3 4L0 6.500 3 9zM10 4l3 2.500L10 9z" />
            </Icon>
          </button>
          <button aria-label="锁定全部">
            <LockIcon />
          </button>
        </div>
        <PercentField id="fill" label="填充:" />
      </div>
      <div className="flex min-h-0 flex-1">
        <ul className="min-w-0 flex-1 bg-[#2b2b2b] text-[11px] font-bold text-white">
          <li className="flex h-[39px] items-stretch border-b border-[#1c1c1c] bg-[#3c3c3c]">
            <EyeButton />
            <div className="flex min-w-0 flex-1 items-center bg-[#587089] pr-3 pl-px">
              <Icon w={36} h={36}>
                <Stroke d="M.5 12V.5H12M24 .5h11.500V12M35.500 24v11.500H24M12 35.500H.5V24" width={1.500} />
                <path d="M11 10h15v4h-1l-1-2h-3.500v11l2 1v1h-8v-1l2-1V12H13l-1 2h-1z" />
              </Icon>
              <span className="ml-[7px] truncate">1.3D数学基础绝不仅仅是线性代数</span>
            </div>
          </li>
          <li className="flex h-10 items-stretch border-b border-[#1c1c1c] bg-[#3c3c3c]">
            <EyeButton />
            <div className="flex flex-1 items-center pr-4 pl-[3px]">
              <span className="h-8 w-[19px] border border-black bg-white" />
              <span className="ml-[9px] italic">背景</span>
              <span className="ml-auto text-[#c8c8c8]">
                <LockIcon />
              </span>
            </div>
          </li>
        </ul>
        <div className="w-[15px] shrink-0 bg-gradient-to-r from-[#191919] to-[#262626]" />
      </div>
      <footer className="flex h-[19px] shrink-0 items-center justify-end gap-[14px] border-t border-b border-t-[#606060] border-b-black pr-[29px] text-[#999]">
        <button aria-label="链接图层">
          <Icon w={14} h={8}>
            <Stroke d="M6 2C2-.5 0 2 1 5c1 2 4 2 5 0M8 2c4-2.500 6 0 5 3-1 2-4 2-5 0M4 4h6" width={1.800} />
          </Icon>
        </button>
        <button className="px-px font-['Liberation_Serif',serif] text-sm leading-4 font-bold italic">fx</button>
        <button aria-label="添加蒙版">
          <Icon w={13} h={10}>
            <path d="M0 0h13v10H0zM6.500 2a3 3 0 1 0 .01 0z" fillRule="evenodd" />
          </Icon>
        </button>
        <button aria-label="新建调整图层">
          <AdjustIcon />
        </button>
        <button aria-label="新建组">
          <Icon w={13} h={10}>
            <path d="M0 0h5l1 2h7v8H0z" />
          </Icon>
        </button>
        <button aria-label="新建图层">
          <Icon w={12} h={11}>
            <path d="M1 0h10v11H6V6H1zM1 7h4v4z" />
          </Icon>
        </button>
        <button aria-label="删除图层">
          <Icon w={12} h={12}>
            <path d="M4 0h4v1h3v2H1V1h3zM2 4h8v8H2z" />
            <path d="M4.500 5v6M6.500 5v6M8.500 5v6" stroke="#3c3c3c" />
          </Icon>
        </button>
      </footer>
    </section>
  );
}

export default function App() {
  return (
    <div className="flex h-screen flex-col overflow-hidden bg-black font-['Noto_Sans','Noto_Sans_CJK_SC',sans-serif]">
      <MenuBar />
      <TitleBar />
      <OptionsBar />
      <div className="flex min-h-0 flex-1">
        <Toolbox />
        <DocumentArea />
        <Dock />
        <div className="flex w-[251px] shrink-0 flex-col border-r border-black">
          <div className="flex h-3 shrink-0 items-center justify-end border-b border-black bg-[#1c1c1c] pr-1">
            <DoubleArrow />
          </div>
          <PropertiesPanel />
          <LayersPanel />
        </div>
      </div>
    </div>
  );
}
